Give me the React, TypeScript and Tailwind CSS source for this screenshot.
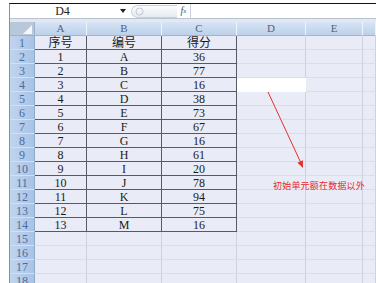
import React from "react";

const serif = "font-['Liberation_Serif','Noto_Sans_CJK_SC',serif]";

const letters = "ABCDEFGHIJKLM".split("");
const scores = [36, 77, 16, 38, 73, 67, 16, 61, 20, 78, 94, 75, 16];

// rows 1..14 hold the data block (A1:C14)
const data: string[][] = [
  ["序号", "编号", "得分"],
  ...scores.map((s, i) => [String(i + 1), letters[i], String(s)]),
];

const headers = ["A", "B", "C", "D", "E", ""];

function FormulaBar() {
  return (
    <div className="flex h-[18px] flex-col bg-[#e4e9f0]">
      <div className="flex h-[15px] items-center border-b border-[#b9c4d3] bg-white">
        <div className={`flex w-[105px] items-center justify-center text-[12px] leading-none text-[#222] ${serif}`}>
          D4
        </div>
        <div className="flex w-[16px] items-center justify-center">
          <svg width="6" height="4" viewBox="0 0 6 4">
            <path d="M0 0h6L3 4z" fill="#222" />
          </svg>
        </div>
        <div className="flex h-[13px] w-[46px] items-center rounded-l-full border border-r-0 border-[#c9d0da] bg-gradient-to-b from-[#fbfcfd] to-[#e6eaf0] pl-[3px]">
          <svg width="9" height="9" viewBox="0 0 9 9">
            <circle cx="4.5" cy="4.5" r="3.5" fill="none" stroke="#c2c8d0" strokeWidth="1" />
          </svg>
        </div>
        <div className="flex w-[13px] items-center justify-center font-['Liberation_Serif',serif] text-[10px] italic leading-none text-[#555]">
          f<span className="text-[7px]">x</span>
        </div>
        <div className="h-full flex-1 border-l border-[#c9d0da] bg-white" />
      </div>
    </div>
  );
}

function Grid() {
  const rows = Array.from({ length: 18 }, (_, i) => i + 1);
  return (
    <div className={`grid auto-rows-[14px] grid-cols-[25px_52px_75px_75px_69px_57px_1fr] bg-[#e9ecf6] text-[12px] leading-none ${serif}`}>
      {/* corner */}
      <div className="relative border-b border-r border-[#9fb1c8] bg-[#b9c7da]">
        <svg className="absolute bottom-[1px] right-[2px]" width="9" height="9" viewBox="0 0 9 9">
          <path d="M9 0v9H0z" fill="#f4f7fb" />
        </svg>
      </div>
      {headers.map((h, i) => (
        <div
          key={i}
          className="flex items-center justify-center border-b border-r border-b-[#9fb6d2] border-r-[#eef4fb] bg-gradient-to-b from-[#d6e4f5] to-[#bcd1ea] text-[11px] text-[#4d6384]"
        >
          {h}
        </div>
      ))}
      {rows.map((r) => (
        <React.Fragment key={r}>
          <div className="flex items-center justify-center border-b border-r border-b-[#d3e0f0] border-r-[#8fa9cc] bg-gradient-to-r from-[#c0d4ee] to-[#a9c3e6] text-[#4a6c9c]">
            {r}
          </div>
          {[0, 1, 2, 3, 4, 5].map((c) => {
            if (r <= 14 && c < 3) {
              return (
                <div
                  key={c}
                  className="flex items-center justify-center border-b border-r border-[#555a66] text-[#1a1a1a]"
                >
                  {data[r - 1][c]}
                </div>
              );
            }
            if (r === 4 && c === 3) {
              return <div key={c} className="border-b border-r border-white bg-white" />;
            }
            return (
              <div
                key={c}
                className="border-b border-r border-b-[#dadeeb] border-r-[#cdd2e0]"
              />
            );
          })}
        </React.Fragment>
      ))}
    </div>
  );
}

function Annotation() {
  return (
    <>
      <svg className="pointer-events-none absolute left-0 top-0" width="376" height="283">
        <line x1="268" y1="92" x2="300.5" y2="162" stroke="#e5302b" strokeWidth="1" />
        <polygon points="303,168 297.4,162.7 302.9,160.2" fill="#e5302b" />
      </svg>
      <div className="absolute left-[273px] top-[180px] font-['Noto_Sans_CJK_SC',sans-serif] text-[9px] leading-[12px] tracking-[0.2px] text-[#e8262b]">
        初始单元额在数据以外
      </div>
    </>
  );
}

export default function App() {
  return (
    <div className="relative h-[283px] w-[376px] overflow-hidden bg-white pl-[9px] pt-[3px]">
      <div className="border-l border-t border-l-[#8090a6] border-t-[#111]">
        <FormulaBar />
        <Grid />
      </div>
      <Annotation />
    </div>
  );
}
